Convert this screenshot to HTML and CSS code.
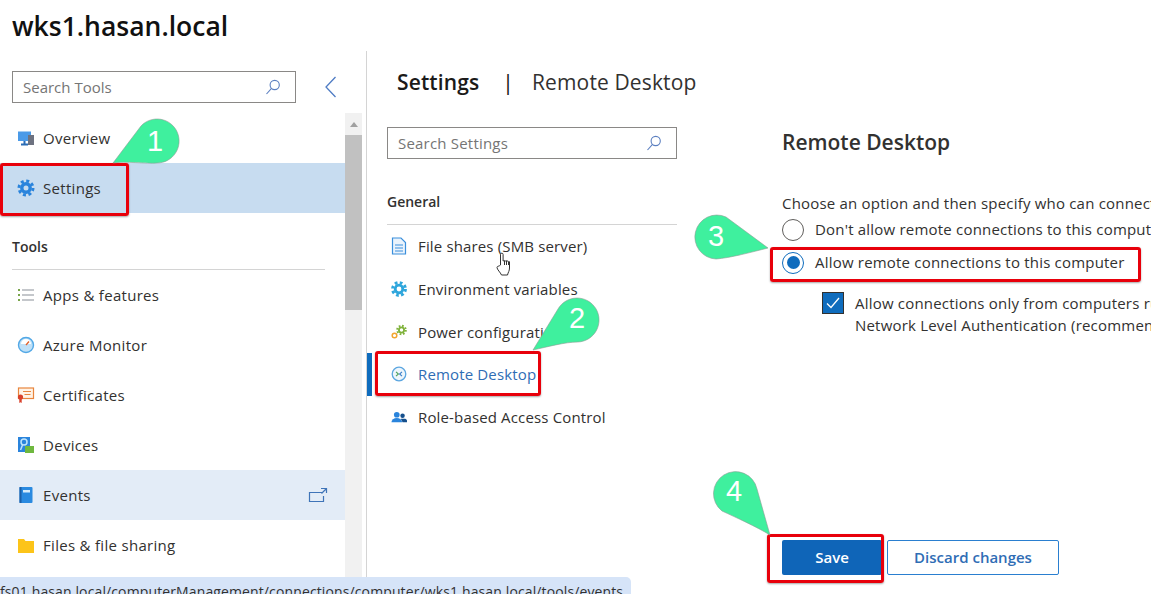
FILE: index.html

```html
<!DOCTYPE html>
<html lang="en">
<head>
    <meta charset="UTF-8">
    <meta name="viewport" content="width=device-width, initial-scale=1.0">
    <title>wks1.hasan.local - Settings</title>
    <link rel="stylesheet" href="styles.css">
</head>
<body>
    <h1 class="host-name">wks1.hasan.local</h1>
    <div class="main">
        <aside class="sidebar">
            <div class="sidebar-top">
                <div class="search search-tools">
                    <span>Search Tools</span>
                    <svg width="16" height="16" viewBox="0 0 16 16" fill="none" stroke="#5b7fc0" stroke-width="1.1"><circle cx="9.7" cy="6" r="4.6"/><path d="M6.5 9.4 1.500 15"/></svg>
                </div>
                <svg class="collapse" width="14" height="24" viewBox="0 0 14 24" fill="none" stroke="#4f7cc4" stroke-width="1.3"><path d="M11.5 2 2 12l9.500 10"/></svg>
            </div>
            <div class="tool-area">
                <nav class="tool-list">
                    <a class="tool-row">
                        <svg width="18" height="18" viewBox="0 0 18 18"><rect x="1" y="2.500" width="13" height="9.500" fill="#4a9ae8"/><rect x="4" y="14.500" width="7" height="2" fill="#2a6cb5"/><rect x="6.500" y="12" width="2" height="3" fill="#2a6cb5"/><rect x="11" y="6" width="6" height="10" fill="#6d7280"/></svg>
                        Overview
                    </a>
                    <a class="tool-row selected">
                        <svg width="18" height="18" viewBox="0 0 18 18" fill="none"><circle cx="9" cy="9" r="7" stroke="#2a84dc" stroke-width="3" stroke-dasharray="2.950 2.550"/><circle cx="9" cy="9" r="4.200" stroke="#2a84dc" stroke-width="3.400"/></svg>
                        Settings
                    </a>
                    <div class="section-title">Tools</div>
                    <a class="tool-row">
                        <svg width="18" height="18" viewBox="0 0 18 18"><g stroke="#79a54a" stroke-width="2"><path d="M1 4h2M1 9h2M1 14h2"/></g><g stroke="#8a8f98" stroke-width="1.200"><path d="M5 4h12M5 9h12M5 14h12"/></g></svg>
                        Apps &amp; features
                    </a>
                    <a class="tool-row">
                        <svg width="18" height="18" viewBox="0 0 18 18"><circle cx="9" cy="9" r="7.500" fill="#bfe0f7" stroke="#52a8e6" stroke-width="1.400"/><path d="M4 8a5 5 0 0 1 10 0z" fill="#fff"/><path d="M9 9l3-3.500" stroke="#e0602a" stroke-width="1.300"/></svg>
                        Azure Monitor
                    </a>
                    <a class="tool-row">
                        <svg width="18" height="18" viewBox="0 0 18 18"><rect x="1.500" y="2" width="15" height="10.500" fill="#fff3e6" stroke="#e8853d" stroke-width="1.200"/><path d="M6 5.500h8M7.500 8.500h6" stroke="#e8853d"/><circle cx="3.500" cy="11" r="2.600" fill="#d9412b"/><path d="M2.300 13h2.400v4l-1.200-.8-1.200.8z" fill="#d9412b"/></svg>
                        Certificates
                    </a>
                    <a class="tool-row">
                        <svg width="18" height="18" viewBox="0 0 18 18"><rect x="1" y="1" width="12" height="15" fill="#2a84dc"/><circle cx="7" cy="6" r="3" fill="none" stroke="#bfe4fb" stroke-width="1.500"/><path d="M5.500 9 3.500 14" stroke="#bfe4fb" stroke-width="1.500"/><rect x="8" y="10" width="9" height="7" fill="#6fb83f"/></svg>
                        Devices
                    </a>
                    <a class="tool-row hovered">
                        <svg width="18" height="18" viewBox="0 0 18 18"><rect x="2.500" y="1" width="13" height="16" rx="1" fill="#2a8ae0"/><rect x="2.500" y="1" width="2" height="16" fill="#1b5fa8"/><rect x="6" y="4" width="7" height="2.500" fill="#d7ecfb"/></svg>
                        Events
                        <svg class="open-new" width="20" height="16" viewBox="0 0 20 16" fill="none" stroke="#3f74b8" stroke-width="1.200"><path d="M15 5.500H1.500v9h14V9M13 1.500h5.500V6M18.500 1.500 13.500 6.500"/></svg>
                    </a>
                    <a class="tool-row">
                        <svg width="18" height="18" viewBox="0 0 18 18"><path d="M1 3h6l1.500 2H17v12H1z" fill="#fcc419"/></svg>
                        Files &amp; file sharing
                    </a>
                </nav>
                <div class="scrollbar">
                    <span class="scroll-arrow"></span>
                    <span class="scroll-thumb"></span>
                </div>
            </div>
        </aside>
        <section class="panel">
            <div class="breadcrumb">
                <strong>Settings</strong>
                <span class="bar">|</span>
                <span>Remote Desktop</span>
            </div>
            <div class="panel-body">
                <div class="settings-nav">
                    <div class="search search-settings">
                        <span>Search Settings</span>
                        <svg width="16" height="16" viewBox="0 0 16 16" fill="none" stroke="#5b7fc0" stroke-width="1.100"><circle cx="9.700" cy="6" r="4.600"/><path d="M6.500 9.400 1.500 15"/></svg>
                    </div>
                    <div class="nav-title">General</div>
                    <a class="nav-row">
                        <svg width="16" height="18" viewBox="0 0 16 18"><path d="M1.500 1h8.500l4.500 4.500V17h-13z" fill="#eaf3fc" stroke="#3a8fdc" stroke-width="1.200"/><path d="M4 8h8M4 11h8M4 14h8" stroke="#3a8fdc"/></svg>
                        File shares (SMB server)
                    </a>
                    <a class="nav-row">
                        <svg width="16" height="18" viewBox="0 0 16 18" fill="none"><circle cx="8" cy="9" r="6.400" stroke="#2ea6dc" stroke-width="3" stroke-dasharray="2.700 2.330"/><circle cx="8" cy="9" r="3.800" stroke="#2ea6dc" stroke-width="2.800"/></svg>
                        Environment variables
                    </a>
                    <a class="nav-row">
                        <svg width="16" height="18" viewBox="0 0 16 18" fill="none"><circle cx="10.500" cy="7" r="4.300" stroke="#7fb23a" stroke-width="2" stroke-dasharray="1.700 1.680"/><circle cx="10.500" cy="7" r="2.600" stroke="#7fb23a" stroke-width="1.800"/><circle cx="3.500" cy="12.500" r="2.300" stroke="#f2a52e" stroke-width="1.500"/></svg>
                        Power configuration
                    </a>
                    <a class="nav-row active">
                        <svg width="16" height="18" viewBox="0 0 16 18" fill="none"><circle cx="8" cy="9" r="6.800" fill="#eef6fc" stroke="#5ca6e0" stroke-width="1.300"/><path d="M5 6.800 7.400 9 5 11.200" stroke="#4ba05c" stroke-width="1.100"/><path d="M11 6.800 8.600 9l2.400 2.200" stroke="#3a7fc8" stroke-width="1.100"/></svg>
                        Remote Desktop
                    </a>
                    <a class="nav-row">
                        <svg width="16" height="16" viewBox="0 0 18 18"><circle cx="6.500" cy="6.500" r="3.200" fill="#2a84dc"/><path d="M.5 15a6 5 0 0 1 12 0z" fill="#2a84dc"/><circle cx="13" cy="7.500" r="2.500" fill="#154f8c"/><path d="M11 11h5a2.500 3 0 0 1 2 4h-5z" fill="#154f8c"/></svg>
                        Role-based Access Control
                    </a>
                </div>
                <div class="content">
                    <h2>Remote Desktop</h2>
                    <p class="intro">Choose an option and then specify who can connect</p>
                    <label class="option"><span class="radio"></span>Don't allow remote connections to this computer</label>
                    <label class="option"><span class="radio checked"></span>Allow remote connections to this computer</label>
                    <div class="check-row">
                        <span class="checkbox"><svg width="14" height="12" viewBox="0 0 14 12" fill="none" stroke="#fff" stroke-width="1.300"><path d="M1 6.500 5 10.500 13 1"/></svg></span>
                        <span>Allow connections only from computers running Remote Desktop with<br>Network Level Authentication (recommended)</span>
                    </div>
                    <div class="actions">
                        <button class="btn primary">Save</button>
                        <button class="btn secondary">Discard changes</button>
                    </div>
                </div>
            </div>
        </section>
    </div>

    <!-- annotations drawn on top of the screenshot -->
    <div class="red-box box-1"></div>
    <div class="red-box box-2"></div>
    <div class="red-box box-3"></div>
    <div class="red-box box-4"></div>

    <svg class="callouts" width="1151" height="594" viewBox="0 0 1151 594">
        <g fill="#3ff09e" stroke="#8d9a93" stroke-width="0.600">
            <path d="M113 163 141 126A22 22 0 1 1 157 163C147 164 125 161 113 163z"/>
            <path d="M533 350 558 309A22 22 0 1 1 578 342C565 342 547 347 533 350z"/>
            <path d="M768 248 726 217A22 22 0 1 0 716 259C730 258 752 252 768 248z"/>
            <path d="M770 535 757 489A22 22 0 1 0 722 511C735 517 757 527 770 535z"/>
        </g>
    </svg>
    <span class="callout-num num-1">1</span>
    <span class="callout-num num-2">2</span>
    <span class="callout-num num-3">3</span>
    <span class="callout-num num-4">4</span>

    <svg class="hand" width="16" height="24" viewBox="0 0 16 24" fill="#fff" stroke="#333" stroke-width="1">
        <path d="M4.500 13V2.500a1.300 1.300 0 0 1 2.600 0V9l1.300-.5 1.300.5 1.300-.2 1.300.6 1.200.3V16c0 3-1.300 4-2 7H5.500c-1-2.500-4.500-5.500-4.500-7.500 0-1.500 2-1 3.500-2.500z"/>
        <path d="M8.500 9v4M10.500 9v4M12.500 10v3" fill="none"/>
    </svg>

    <div class="status-bar">fs01.hasan.local/computerManagement/connections/computer/wks1.hasan.local/tools/events</div>
</body>
</html>
```

FILE: styles.css

```css
* {
    box-sizing: border-box;
}
html, body {
    height: 594px;
}
body {
    position: relative;
    margin: 0;
    overflow: hidden;
    background: #fff;
    color: #323130;
    font-family: "Open Sans", "Noto Sans", sans-serif;
    font-size: 15px;
    letter-spacing: 0.2px;
}
svg {
    flex: none;
}
.host-name {
    height: 51px;
    margin: 0;
    padding-left: 12px;
    font-size: 26.500px;
    font-weight: 600;
    line-height: 52px;
    letter-spacing: 0;
    color: #111;
}
.main {
    display: flex;
    height: 543px;
}
.sidebar {
    width: 367px;
    flex: none;
    border-right: 1px solid #d4d4d4;
}
.sidebar-top {
    display: flex;
    align-items: center;
    gap: 28px;
    height: 62px;
    padding: 20px 0 10px 12px;
}
.search {
    display: flex;
    align-items: center;
    justify-content: space-between;
    height: 32px;
    padding: 0 14px 0 10px;
    border: 1px solid #8a8886;
    color: #757575;
}
.search-tools {
    width: 284px;
    letter-spacing: 0;
}
.search-settings {
    width: 290px;
}
.tool-area {
    display: flex;
    height: 481px;
}
.tool-list {
    width: 345px;
    flex: none;
    letter-spacing: 0.3px;
}
.tool-row {
    display: flex;
    align-items: center;
    gap: 8px;
    height: 50px;
    padding-left: 17px;
}
.tool-row.selected {
    background: #c7dcf0;
}
.tool-row.hovered {
    background: #e3ecf7;
}
.open-new {
    margin-left: auto;
    margin-right: 17px;
}
.section-title {
    height: 57px;
    margin: 0 20px 0 12px;
    padding-top: 23px;
    border-bottom: 1px solid #d4d4d4;
    font-size: 14px;
    font-weight: 600;
    line-height: 22px;
    letter-spacing: 0;
}
.scrollbar {
    display: flex;
    flex-direction: column;
    width: 17px;
    background: #f1f1f1;
}
.scroll-arrow {
    width: 0;
    height: 0;
    margin: 9px auto 8px;
    border: 4px solid transparent;
    border-top: 0;
    border-bottom: 5px solid #a0a0a0;
}
.scroll-thumb {
    height: 175px;
    background: #c1c1c1;
}
.panel {
    flex: 1;
    min-width: 0;
}
.breadcrumb {
    display: flex;
    align-items: center;
    height: 62px;
    padding-left: 30px;
    font-size: 21px;
    letter-spacing: 0.13px;
}
.breadcrumb strong {
    font-weight: 600;
    color: #1b1a19;
}
.bar {
    margin: 0 18px 0 23px;
    color: #111;
}
.panel-body {
    display: flex;
    padding-top: 14px;
}
.settings-nav {
    position: relative;
    width: 290px;
    flex: none;
    margin-left: 20px;
}
.nav-title {
    height: 66px;
    padding-top: 32px;
    border-bottom: 1px solid #d4d4d4;
    font-size: 14px;
    font-weight: 600;
    line-height: 22px;
    letter-spacing: 0;
}
.nav-row {
    display: flex;
    align-items: center;
    gap: 11px;
    height: 42.700px;
    padding-left: 4px;
    letter-spacing: 0.15px;
}
.nav-row.active {
    color: #2f6db5;
}
.nav-row.active::before {
    content: "";
    position: absolute;
    left: -20px;
    width: 5px;
    height: 43px;
    background: #0f6cbd;
}
.content {
    flex: 1;
    min-width: 0;
    margin-left: 105px;
    padding-top: 1px;
    overflow: hidden;
    white-space: nowrap;
}
.content h2 {
    margin: 0;
    font-size: 21px;
    font-weight: 600;
    line-height: 28px;
    letter-spacing: 0;
}
.intro {
    margin: 36px 0 0;
    line-height: 22px;
}
.option {
    display: flex;
    align-items: center;
    gap: 11px;
    height: 33px;
    padding-bottom: 2px;
}
.intro + .option {
    margin-top: -1px;
}
.radio {
    position: relative;
    width: 22px;
    height: 22px;
    flex: none;
    margin-top: 2px;
    border: 1.500px solid #605e5c;
    border-radius: 50%;
}
.radio.checked {
    border-color: #0f6cbd;
}
.radio.checked::after {
    content: "";
    position: absolute;
    inset: 3.500px;
    border-radius: 50%;
    background: #0f6cbd;
}
.check-row {
    display: flex;
    gap: 11px;
    margin: 13px 0 0 40px;
    line-height: 22px;
}
.checkbox {
    display: flex;
    align-items: center;
    justify-content: center;
    width: 22px;
    height: 22px;
    flex: none;
    border: 1px solid #323130;
    background: #0f6cbd;
}
.actions {
    display: flex;
    gap: 5px;
    margin-top: 204px;
}
.btn {
    height: 35px;
    padding: 0 0 2px;
    border-radius: 2px;
    font-family: inherit;
    font-size: 15px;
    font-weight: 600;
}
.primary {
    width: 100px;
    border: 0;
    background: #0f65b8;
    color: #fff;
}
.secondary {
    width: 172px;
    border: 1px solid #2a7fd0;
    background: #fff;
    color: #2f6db5;
}

/* annotations */
.red-box {
    position: absolute;
    border: 3px solid #e8000b;
    border-radius: 3px;
    box-shadow: 0 1px 2px rgba(0, 0, 0, 0.35);
}
.box-1 {
    left: 0;
    top: 163px;
    width: 129px;
    height: 53px;
}
.box-2 {
    left: 375px;
    top: 351px;
    width: 166px;
    height: 45px;
}
.box-3 {
    left: 770px;
    top: 247px;
    width: 371px;
    height: 35px;
}
.box-4 {
    left: 767px;
    top: 534px;
    width: 117px;
    height: 49px;
}
.callouts {
    position: absolute;
    left: 0;
    top: 0;
    pointer-events: none;
}
.callout-num {
    position: absolute;
    width: 24px;
    margin-left: -12px;
    color: #fff;
    font-family: "Liberation Sans", sans-serif;
    font-size: 29px;
    line-height: 32px;
    letter-spacing: 0;
    text-align: center;
}
.num-1 {
    left: 155px;
    top: 125px;
}
.num-2 {
    left: 577px;
    top: 302px;
}
.num-3 {
    left: 716px;
    top: 220px;
}
.num-4 {
    left: 734px;
    top: 475px;
}
.hand {
    position: absolute;
    left: 496px;
    top: 252px;
}
.status-bar {
    position: absolute;
    left: 0;
    top: 577px;
    width: 631px;
    height: 17px;
    padding: 5px 0 0 0;
    overflow: hidden;
    border-top-right-radius: 5px;
    background: #d6e4f8;
    white-space: nowrap;
    font-size: 14px;
    line-height: 20px;
    letter-spacing: 0.12px;
}
```
